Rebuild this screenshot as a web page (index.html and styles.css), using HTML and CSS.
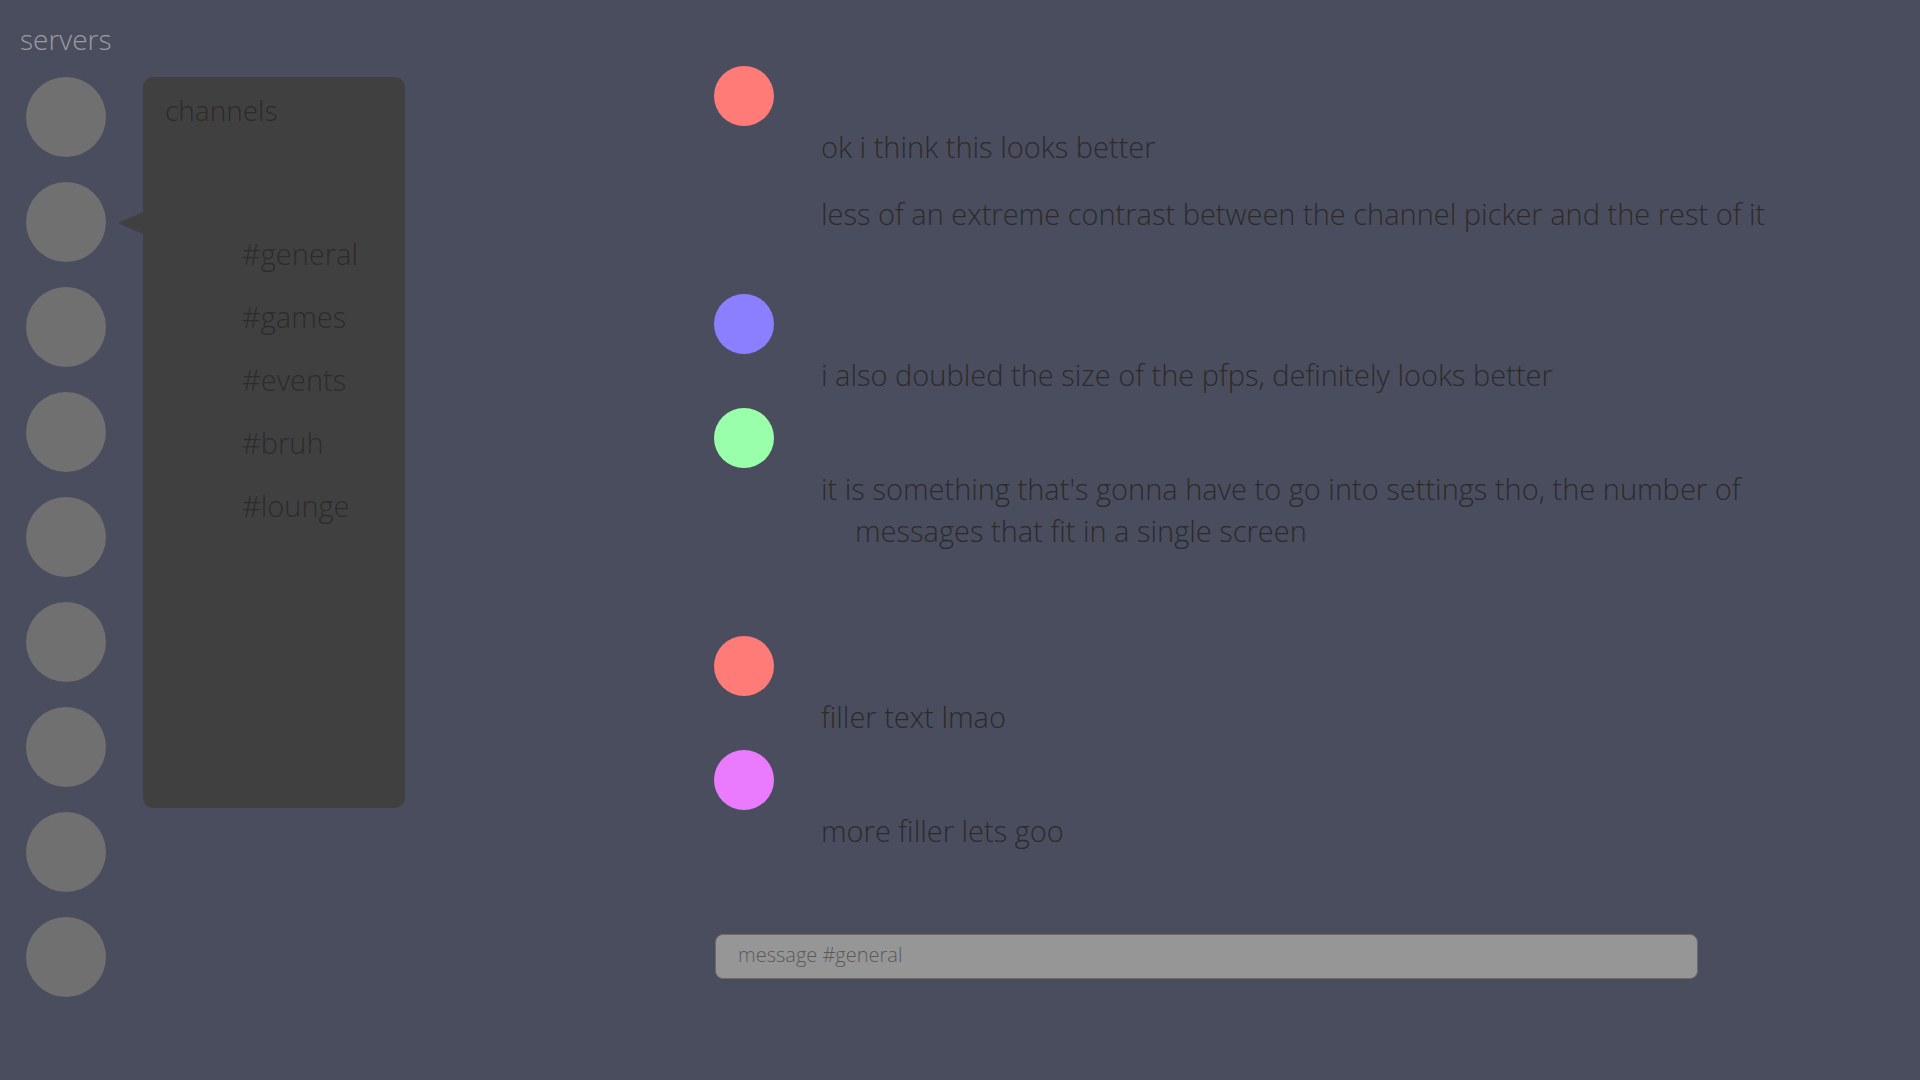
FILE: index.html
```html
<!DOCTYPE html>
<html lang="en">
<head>
<meta charset="utf-8">
<title>chat</title>
<link rel="stylesheet" href="styles.css">
</head>
<body>
  <aside class="left">
    <h2 class="servers-title">servers</h2>
    <div class="left-row">
      <div class="server-list">
        <div class="server"></div>
        <div class="server"></div>
        <div class="server"></div>
        <div class="server"></div>
        <div class="server"></div>
        <div class="server"></div>
        <div class="server"></div>
        <div class="server"></div>
        <div class="server"></div>
      </div>
      <nav class="channels">
        <h3 class="channels-title">channels</h3>
        <ul class="channel-list">
          <li>#general</li>
          <li>#games</li>
          <li>#events</li>
          <li>#bruh</li>
          <li>#lounge</li>
        </ul>
      </nav>
    </div>
  </aside>
  <main class="chat">
    <div class="msg msg-1">
      <div class="avatar red"></div>
      <p>ok i think this looks better</p>
      <p class="next">less of an extreme contrast between the channel picker and the rest of it</p>
    </div>
    <div class="msg msg-2">
      <div class="avatar blue"></div>
      <p>i also doubled the size of the pfps, definitely looks better</p>
    </div>
    <div class="msg msg-3">
      <div class="avatar green"></div>
      <p class="hang">it is something that's gonna have to go into settings tho, the number of<br>messages that fit in a single screen</p>
    </div>
    <div class="msg msg-4">
      <div class="avatar red"></div>
      <p>filler text lmao</p>
    </div>
    <div class="msg msg-5">
      <div class="avatar pink"></div>
      <p>more filler lets goo</p>
    </div>
    <input class="composer" type="text" placeholder="message #general">
  </main>
</body>
</html>
```
FILE: styles.css
```css
* { box-sizing: border-box; }
html, body { margin: 0; height: 100%; }
body {
  background: #4a4d5e;
  font-family: "Open Sans", "Liberation Sans", sans-serif;
  font-weight: 300;
  color: #2b2b2b;
  display: flex;
  overflow: hidden;
}
.left {
  width: 405px;
  flex: none;
  display: flex;
  flex-direction: column;
}
.servers-title {
  margin: 0;
  height: 77px;
  padding: 19px 0 0 20px;
  font-size: 28px;
  line-height: 40px;
  font-weight: 300;
  color: #9c9c9c;
}
.left-row {
  display: flex;
  align-items: flex-start;
  gap: 37px;
}
.server-list {
  display: flex;
  flex-direction: column;
  gap: 25px;
  margin-left: 26px;
}
.server {
  width: 80px;
  height: 80px;
  border-radius: 50%;
  background: #707070;
}
.channels {
  position: relative;
  width: 262px;
  height: 731px;
  background: #404040;
  border-radius: 10px;
  padding: 13px 0 0 22px;
}
.channels::before {
  content: "";
  position: absolute;
  left: -25px;
  top: 135px;
  border-right: 25px solid #404040;
  border-top: 11px solid transparent;
  border-bottom: 11px solid transparent;
}
.channels-title {
  margin: 0;
  font-size: 28px;
  line-height: 40px;
  font-weight: 300;
  color: #2b2b2b;
}
.channel-list {
  list-style: none;
  margin: 104px 0 0 77px;
  padding: 0;
  display: flex;
  flex-direction: column;
  gap: 23px;
  font-size: 29px;
  line-height: 40px;
  color: #2c2c2c;
}
.chat {
  margin-left: 309px;
  padding-top: 66px;
  width: 1100px;
  flex: none;
}
.avatar {
  width: 60px;
  height: 60px;
  border-radius: 50%;
}
.red { background: #ff7b77; }
.blue { background: #8a80ff; }
.green { background: #99ffaa; }
.pink { background: #ea7bff; }
.msg p {
  margin: 0 0 0 107px;
  font-size: 29px;
  line-height: 42px;
}
.msg p.next { margin-top: 25px; }
.msg p.hang {
  padding-left: 34px;
  text-indent: -34px;
}
.msg-1 { margin-bottom: 59px; }
.msg-2 { margin-bottom: 12px; }
.msg-3 { margin-bottom: 84px; }
.msg-4 { margin-bottom: 12px; }
.composer {
  display: block;
  margin: 82px 0 0 1px;
  width: 983px;
  height: 45px;
  padding: 0 0 4px 22px;
  background: #969696;
  border: 1px solid #6b6b6b;
  border-radius: 8px;
  font-family: "Open Sans", "Liberation Sans", sans-serif;
  font-weight: 300;
  font-size: 20px;
  color: #4a4a4a;
  outline: none;
}
.composer::placeholder {
  color: #5a5a5a;
  opacity: 1;
}
```
